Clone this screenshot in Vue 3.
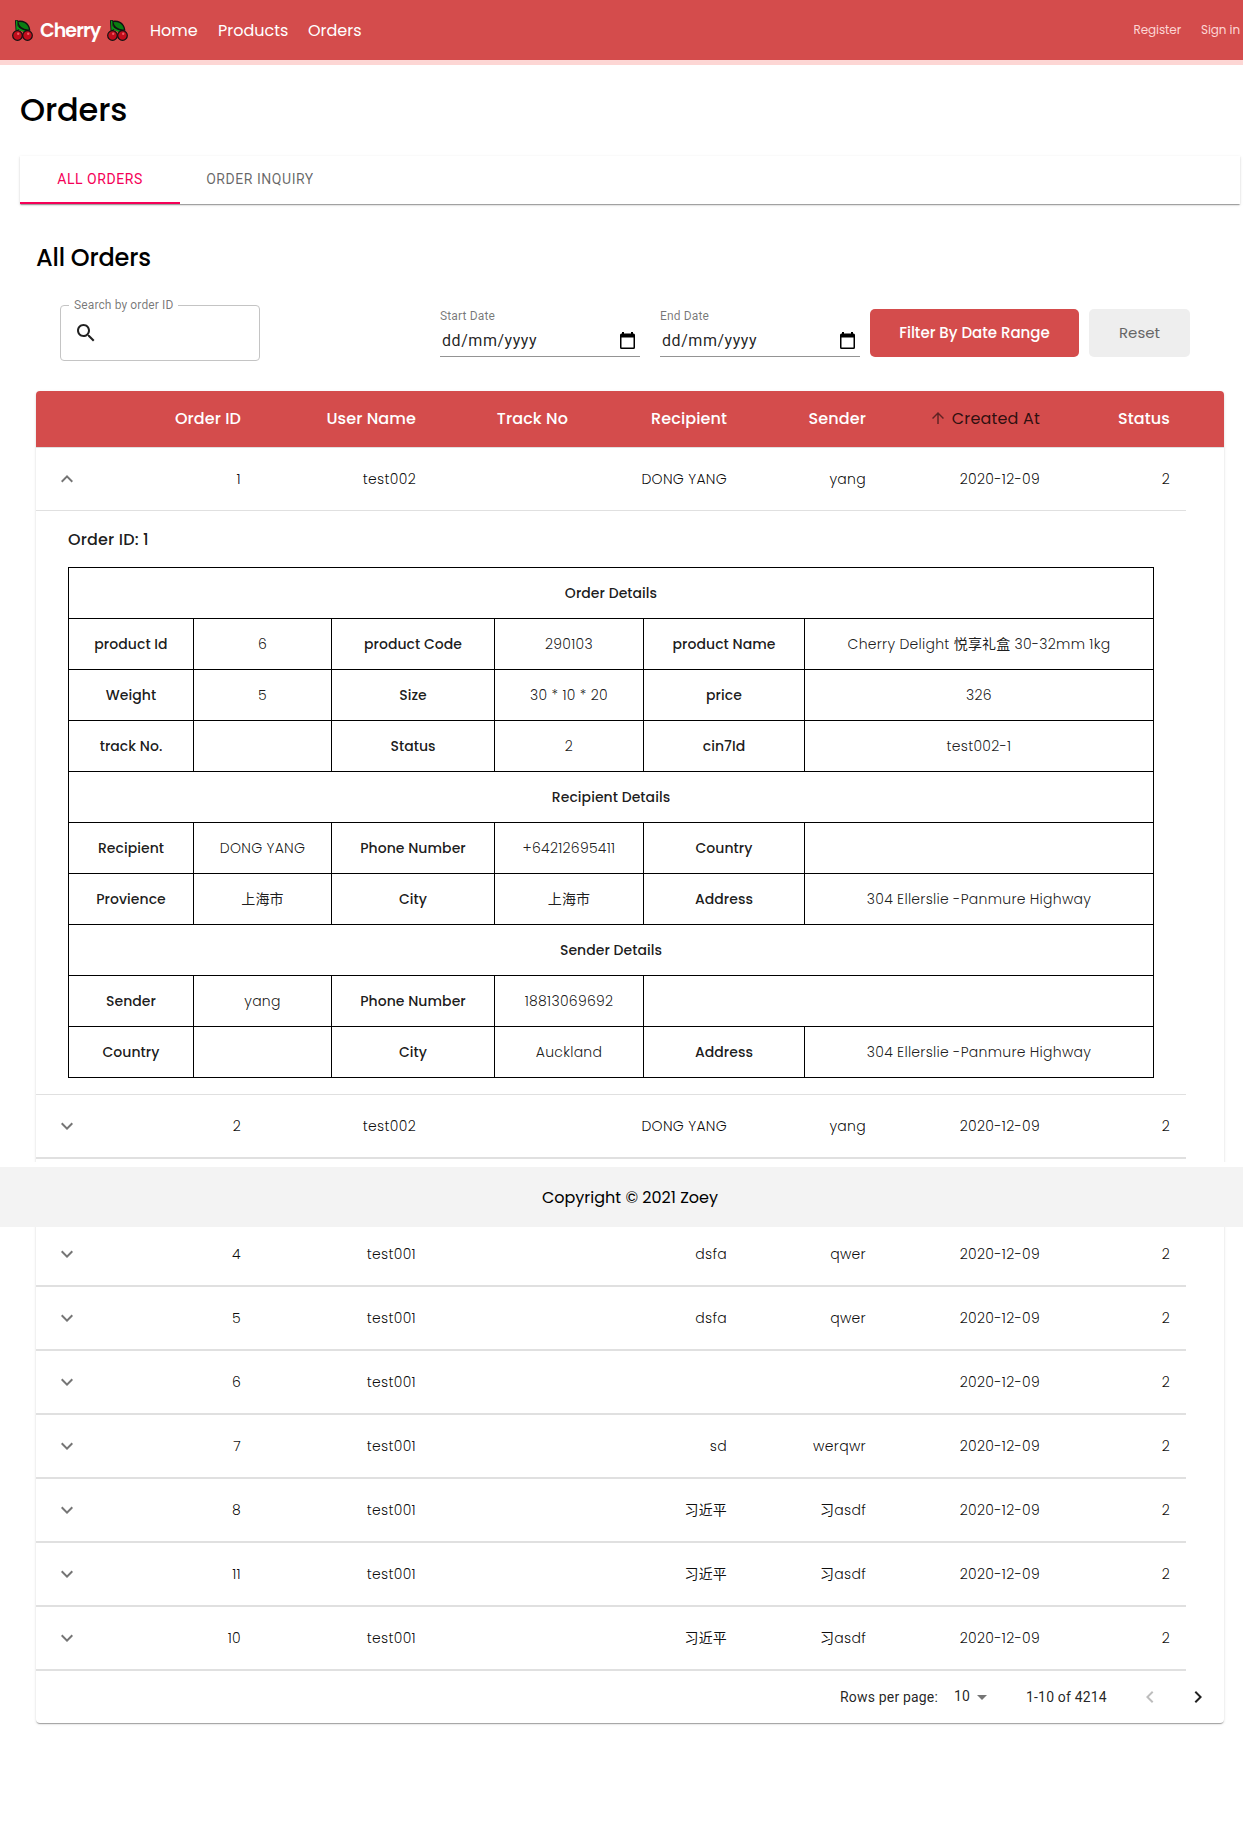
<script setup>
const columns = ['', 'Order ID', 'User Name', 'Track No', 'Recipient', 'Sender', 'Created At', 'Status']

const orders = [
  { id: '1', user: 'test002', track: '', recipient: 'DONG YANG', sender: 'yang', created: '2020-12-09', status: '2', open: true },
  { id: '2', user: 'test002', track: '', recipient: 'DONG YANG', sender: 'yang', created: '2020-12-09', status: '2' },
  { id: '3', user: 'test001', track: '', recipient: '', sender: '', created: '2020-12-09', status: '2' },
  { id: '4', user: 'test001', track: '', recipient: 'dsfa', sender: 'qwer', created: '2020-12-09', status: '2' },
  { id: '5', user: 'test001', track: '', recipient: 'dsfa', sender: 'qwer', created: '2020-12-09', status: '2' },
  { id: '6', user: 'test001', track: '', recipient: '', sender: '', created: '2020-12-09', status: '2' },
  { id: '7', user: 'test001', track: '', recipient: 'sd', sender: 'werqwr', created: '2020-12-09', status: '2' },
  { id: '8', user: 'test001', track: '', recipient: '习近平', sender: '习asdf', created: '2020-12-09', status: '2' },
  { id: '11', user: 'test001', track: '', recipient: '习近平', sender: '习asdf', created: '2020-12-09', status: '2' },
  { id: '10', user: 'test001', track: '', recipient: '习近平', sender: '习asdf', created: '2020-12-09', status: '2' },
]

const fields = ['id', 'user', 'track', 'recipient', 'sender', 'created', 'status']

// Each row alternates label and value; a single entry spans the full table.
const details = [
  ['Order Details'],
  ['product Id', '6', 'product Code', '290103', 'product Name', 'Cherry Delight 悦享礼盒 30-32mm 1kg'],
  ['Weight', '5', 'Size', '30 * 10 * 20', 'price', '326'],
  ['track No.', '', 'Status', '2', 'cin7Id', 'test002-1'],
  ['Recipient Details'],
  ['Recipient', 'DONG YANG', 'Phone Number', '+64212695411', 'Country', ''],
  ['Provience', '上海市', 'City', '上海市', 'Address', '304 Ellerslie -Panmure Highway'],
  ['Sender Details'],
  ['Sender', 'yang', 'Phone Number', '18813069692', ''],
  ['Country', '', 'City', 'Auckland', 'Address', '304 Ellerslie -Panmure Highway'],
]

function span(row, index) {
  if (row.length === 1) return 6
  if (row.length === 5 && index === 4) return 2
  return 1
}

// Splits a value into Latin and Chinese runs, as the two need different weights.
function runs(text) {
  return text.match(/[\u4e00-\u9fff]+|[^\u4e00-\u9fff]+/g) || []
}

function isHan(text) {
  return /[\u4e00-\u9fff]/.test(text)
}
</script>

<template>
  <div class="page">
    <svg class="symbols" width="0" height="0">
      <symbol id="cherries" viewBox="0 0 21 21">
        <path d="M4.500 1.200 5 10M5.600 7.500 14.500 11" stroke="#111" stroke-width="3" fill="none" stroke-linecap="round" />
        <path d="M5.500 1.500C10 .6 16.500 2 17.700 10 12 10.500 7 9 5.500 1.500Z" fill="#0b7d12" stroke="#111" stroke-width="1.300" />
        <path d="M4.600 1.300 5.200 11M5 6.500Q8 10.500 13.500 11.500" stroke="#0c9a18" stroke-width="1.400" fill="none" stroke-linecap="round" />
        <circle cx="5.500" cy="15.500" r="4.800" fill="#c20d1c" stroke="#111" stroke-width="1.200" />
        <circle cx="15.500" cy="15.500" r="4.800" fill="#c20d1c" stroke="#111" stroke-width="1.200" />
        <circle cx="6.200" cy="13.700" r="1.200" fill="#ee5a64" />
        <circle cx="16.200" cy="13.700" r="1.200" fill="#ee5a64" />
      </symbol>
    </svg>

    <header class="navbar">
      <div class="brand">
        <svg class="cherry"><use href="#cherries" /></svg>
        <span class="brand-name">Cherry</span>
        <svg class="cherry"><use href="#cherries" /></svg>
      </div>
      <nav class="links">
        <a class="home">Home</a>
        <a class="products">Products</a>
        <a class="orders-link">Orders</a>
      </nav>
      <nav class="account">
        <a class="register">Register</a>
        <a class="signin">Sign in</a>
      </nav>
    </header>

    <main>
      <h1>Orders</h1>
      <div class="tabs">
        <div class="tab active">All Orders</div>
        <div class="tab">Order Inquiry</div>
      </div>

      <section class="panel">
        <h2>All Orders</h2>
        <div class="toolbar">
          <fieldset class="search">
            <legend>Search by order ID</legend>
            <svg width="24" height="24" viewBox="0 0 24 24"><path d="M15.500 14h-.79l-.28-.27C15.410 12.590 16 11.110 16 9.500 16 5.910 13.090 3 9.500 3S3 5.910 3 9.500 5.910 16 9.500 16c1.610 0 3.090-.59 4.230-1.570l.27.28v.79l5 4.990L20.490 19l-4.990-5zm-6 0C7.010 14 5 11.990 5 9.500S7.010 5 9.500 5 14 7.010 14 9.500 11.990 14 9.500 14z" /></svg>
          </fieldset>
          <div v-for="label in ['Start Date', 'End Date']" :key="label" class="date">
            <label>{{ label }}</label>
            <div class="date-input">
              <span>dd/mm/yyyy</span>
              <svg width="15" height="17" viewBox="0 0 15 17"><path d="M2 0h2v1.500h7V0h2v1.500h.5A1.500 1.500 0 0 1 15 3v12.500a1.500 1.500 0 0 1-1.500 1.500h-12A1.500 1.500 0 0 1 0 15.500V3a1.500 1.500 0 0 1 1.500-1.500H2zM1.500 5.500v10h12v-10z" fill-rule="evenodd" /></svg>
            </div>
          </div>
          <button class="filter">Filter By Date Range</button>
          <button class="reset">Reset</button>
        </div>

        <div class="card">
          <div class="grid head">
            <div v-for="(name, i) in columns" :key="i" class="cell" :class="{ sorted: name === 'Created At' }">
              <svg v-if="name === 'Created At'" width="18" height="18" viewBox="0 0 24 24"><path d="M4 12l1.410 1.410L11 7.830V20h2V7.830l5.580 5.590L20 12l-8-8-8 8z" /></svg>
              {{ name }}
            </div>
          </div>

          <template v-for="order in orders" :key="order.id">
            <div class="grid row" :class="{ open: order.open }">
              <div class="toggle">
                <svg width="24" height="24" viewBox="0 0 24 24">
                  <path v-if="order.open" d="M7.410 15.410L12 10.830l4.590 4.580L18 14l-6-6-6 6z" />
                  <path v-else d="M7.410 8.590L12 13.170l4.590-4.580L18 10l-6 6-6-6z" />
                </svg>
              </div>
              <div v-for="field in fields" :key="field" class="cell"><span v-for="(run, k) in runs(order[field])" :key="k" :class="{ han: isHan(run) }">{{ run }}</span></div>
            </div>
            <div v-if="order.open" class="detail">
              <h3>Order ID: {{ order.id }}</h3>
              <table>
                <colgroup>
                  <col class="c1"><col class="c2"><col class="c3"><col class="c4"><col class="c5"><col class="c6">
                </colgroup>
                <tbody>
                  <tr v-for="(row, r) in details" :key="r">
                    <component :is="i % 2 ? 'td' : 'th'" v-for="(text, i) in row" :key="i" :colspan="span(row, i)"><span v-for="(run, k) in runs(text)" :key="k" :class="{ han: isHan(run) }">{{ run }}</span></component>
                  </tr>
                </tbody>
              </table>
            </div>
          </template>

          <div class="pagination">
            <span class="per-page">Rows per page:</span>
            <span class="size">10</span>
            <svg class="drop" width="24" height="24" viewBox="0 0 24 24"><path d="M7 10l5 5 5-5z" /></svg>
            <span class="range">1-10 of 4214</span>
            <svg class="prev" width="24" height="24" viewBox="0 0 24 24"><path d="M15.410 7.410L14 6l-6 6 6 6 1.410-1.410L10.830 12z" /></svg>
            <svg class="next" width="24" height="24" viewBox="0 0 24 24"><path d="M10 6L8.590 7.410 13.170 12l-4.580 4.590L10 18l6-6z" /></svg>
          </div>
        </div>
      </section>
    </main>

    <footer>Copyright © 2021 Zoey</footer>
  </div>
</template>

<style>
body {
  margin: 0;
  background: #fff;
}
</style>

<style scoped>
.page {
  position: relative;
  width: 1243px;
  height: 1839px;
  overflow: hidden;
  font-family: Poppins, Inter, "Noto Sans CJK SC", sans-serif;
  font-size: 16px;
  color: #000;
}
.page * {
  box-sizing: border-box;
}
.symbols {
  position: absolute;
}
.navbar {
  display: flex;
  align-items: center;
  height: 65px;
  padding: 0 3px 0 12px;
  background: #d44c4c;
  border-bottom: 5px solid #fdd6d4;
  color: #fff;
}
.brand {
  display: flex;
  align-items: center;
  width: 138px;
}
.cherry {
  width: 21px;
  height: 21px;
}
.brand-name {
  width: 60px;
  margin: 0 7px;
  font-size: 19px;
  font-weight: 600;
  letter-spacing: -0.9px;
  white-space: nowrap;
}
.links {
  display: flex;
  flex: 1;
}
.home {
  width: 68px;
}
.products {
  width: 90px;
}
.account {
  display: flex;
  gap: 20px;
  font-size: 12px;
  color: #fdd6d4;
}
.register,
.signin {
  letter-spacing: -0.1px;
}
h1,
h2,
h3 {
  margin: 0;
  font-weight: 500;
}
h1 {
  padding: 20px 0 0 20px;
  height: 91px;
  font-size: 32px;
  line-height: 50px;
  letter-spacing: -0.15px;
}
.tabs {
  display: flex;
  width: 1220px;
  height: 48px;
  margin-left: 20px;
  box-shadow: 0 2px 1px -1px rgba(0, 0, 0, 0.2), 0 1px 1px rgba(0, 0, 0, 0.14), 0 1px 3px rgba(0, 0, 0, 0.12);
}
.tab {
  width: 160px;
  height: 48px;
  text-align: center;
  font: 400 14px/47px Roboto, sans-serif;
  letter-spacing: 0.55px;
  text-transform: uppercase;
  color: rgba(0, 0, 0, 0.6);
}
.tab.active {
  color: #f50057;
  border-bottom: 2px solid #f50057;
}
.panel {
  padding: 36px 0 0 36px;
}
h2 {
  height: 60px;
  font-size: 24px;
  line-height: 36px;
  letter-spacing: -0.2px;
}
.toolbar {
  display: flex;
  align-items: flex-end;
  height: 61px;
  margin: 0 34px 30px 24px;
}
.search {
  width: 200px;
  height: 63px;
  margin: 0 180px 0 0;
  padding: 0 13px 0 8px;
  border: 1px solid #c4c4c4;
  border-radius: 4px;
}
.search legend {
  height: 14px;
  padding: 0 5px;
  font: 12px/14px Roboto, sans-serif;
  letter-spacing: 0.12px;
  color: rgba(0, 0, 0, 0.54);
}
.search svg {
  display: block;
  margin: 9px 0 0 5px;
  fill: rgba(0, 0, 0, 0.87);
}
.date {
  width: 200px;
  height: 52px;
  margin: 0 20px 4px 0;
  border-bottom: 1px solid rgba(0, 0, 0, 0.42);
  font-family: Roboto, sans-serif;
  color: rgba(0, 0, 0, 0.87);
}
.date + .date {
  margin-right: 10px;
}
.date label {
  display: block;
  font-size: 12px;
  line-height: 12px;
  padding-top: 5px;
  letter-spacing: 0.15px;
  color: rgba(0, 0, 0, 0.54);
}
.date-input {
  display: flex;
  align-items: center;
  justify-content: space-between;
  height: 24px;
  padding: 0 5px 0 2px;
  margin-top: 6px;
  letter-spacing: 0.55px;
}
.date-input svg {
  fill: #000;
}
button {
  height: 48px;
  margin: 0 0 4px;
  padding: 0 0 2px;
  border: 0;
  border-radius: 5px;
  font: 500 15px Poppins, Inter, sans-serif;
}
.filter {
  width: 209px;
  background: #d44c4c;
  color: #fff;
}
.reset {
  width: 101px;
  margin-left: 10px;
  background: #eee;
  color: #666;
  font-weight: 400;
}
.card {
  width: 1188px;
  border-radius: 4px;
  overflow: hidden;
  box-shadow: 0 2px 1px -1px rgba(0, 0, 0, 0.2), 0 1px 1px rgba(0, 0, 0, 0.14), 0 1px 3px rgba(0, 0, 0, 0.12);
}
.grid {
  display: grid;
  grid-template-columns: 62px 159px 175px 152px 159px 139px 174px 130px;
  align-items: center;
}
.cell {
  padding-right: 16px;
  text-align: right;
  white-space: nowrap;
}
.head {
  height: 57px;
  padding-bottom: 2px;
  background: #d44c4c;
  border-bottom: 1px solid #e0e0e0;
  color: #fff;
  font-weight: 500;
  letter-spacing: 0.1px;
}
.head .sorted {
  display: flex;
  align-items: center;
  justify-content: flex-end;
  gap: 5px;
  color: rgba(0, 0, 0, 0.8);
  font-weight: 400;
  letter-spacing: 0.17px;
}
.sorted svg {
  fill: rgba(0, 0, 0, 0.54);
}
.row {
  width: 1150px;
  height: 64px;
  border-bottom: 2px solid #e0e0e0;
  font-size: 14px;
  font-weight: 300;
  letter-spacing: 0.3px;
  color: rgba(0, 0, 0, 0.95);
}
.row.open {
  height: 63px;
  border-bottom-width: 1px;
}
.han {
  font-weight: 400;
  letter-spacing: 0.15px;
}
.toggle {
  display: flex;
  justify-content: center;
}
.toggle svg {
  fill: rgba(0, 0, 0, 0.54);
}
.detail {
  width: 1150px;
  height: 584px;
  padding: 16px 32px 0;
  border-bottom: 1px solid #e0e0e0;
  color: rgba(0, 0, 0, 0.9);
}
h3 {
  height: 40px;
  font-size: 16px;
  line-height: 25px;
  letter-spacing: 0.17px;
}
table {
  width: 1086px;
  table-layout: fixed;
  border-collapse: collapse;
  font-size: 14px;
}
.c1 { width: 125px; }
.c2 { width: 138px; }
.c3 { width: 163px; }
.c4 { width: 149px; }
.c5 { width: 161px; }
th,
td {
  height: 51px;
  padding: 0;
  border: 1px solid #000;
  text-align: center;
  white-space: nowrap;
  line-height: 20px;
}
th {
  font-weight: 500;
  letter-spacing: 0.05px;
}
td {
  font-weight: 300;
  letter-spacing: 0.27px;
}
.pagination {
  display: flex;
  align-items: center;
  height: 52px;
  padding: 0 0 1px 804px;
  font: 14px Roboto, sans-serif;
  letter-spacing: 0.18px;
  color: rgba(0, 0, 0, 0.87);
}
.per-page {
  width: 114px;
}
.size {
  width: 16px;
  margin-top: -2px;
}
.drop {
  fill: rgba(0, 0, 0, 0.54);
}
.range {
  width: 82px;
  margin-left: 32px;
  white-space: nowrap;
}
.prev {
  margin-left: 30px;
  fill: rgba(0, 0, 0, 0.26);
}
.next {
  margin-left: 24px;
  fill: rgba(0, 0, 0, 0.87);
}
footer {
  position: absolute;
  top: 1162px;
  left: 0;
  width: 100%;
  height: 65px;
  padding-left: 17px;
  border-top: 5px solid #fff;
  background: #f3f3f3;
  text-align: center;
  line-height: 61px;
}
</style>
